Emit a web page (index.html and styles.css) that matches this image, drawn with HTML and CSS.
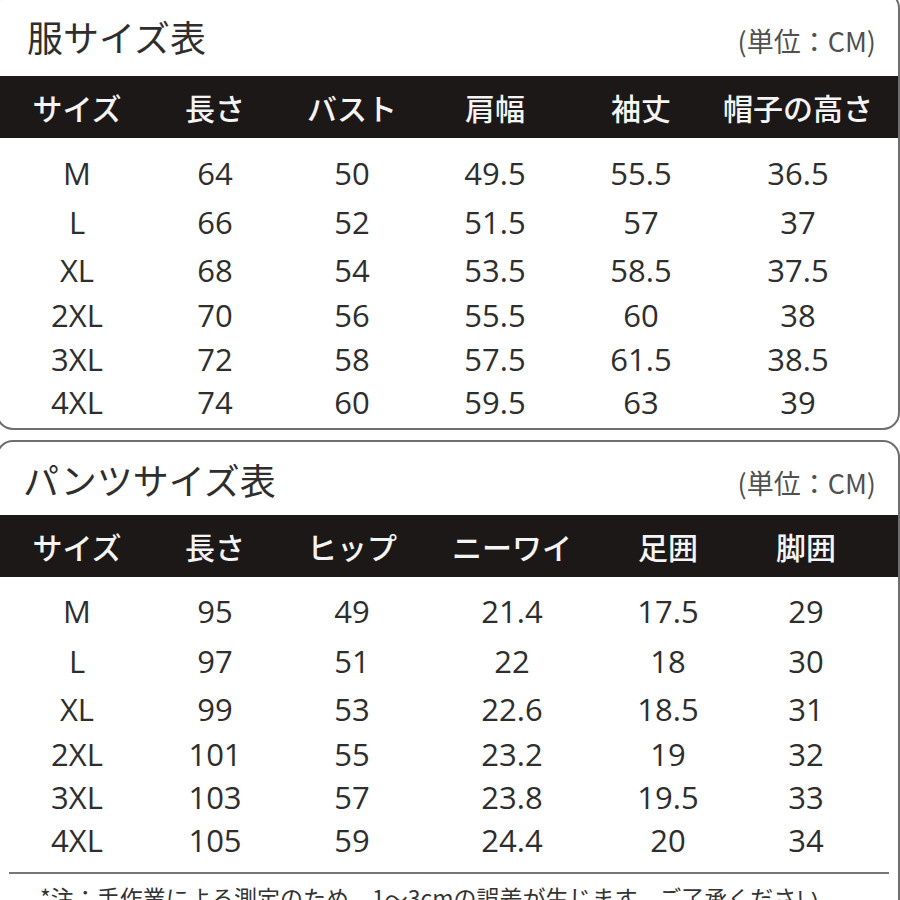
FILE: index.html
```html
<!DOCTYPE html>
<html lang="ja">
<head>
<meta charset="utf-8">
<title>サイズ表</title>
<link rel="stylesheet" href="styles.css">
</head>
<body>
<section class="card card-tops">
  <div class="card-head">
    <h2 class="title">服サイズ表</h2>
    <span class="unit">(単位：CM)</span>
  </div>
  <div class="table tops">
    <div class="row head"><span>サイズ</span><span>長さ</span><span>バスト</span><span>肩幅</span><span>袖丈</span><span>帽子の高さ</span></div>
    <div class="body">
      <div class="row"><span>M</span><span>64</span><span>50</span><span>49.5</span><span>55.5</span><span>36.5</span></div>
      <div class="row"><span>L</span><span>66</span><span>52</span><span>51.5</span><span>57</span><span>37</span></div>
      <div class="row"><span>XL</span><span>68</span><span>54</span><span>53.5</span><span>58.5</span><span>37.5</span></div>
      <div class="row"><span>2XL</span><span>70</span><span>56</span><span>55.5</span><span>60</span><span>38</span></div>
      <div class="row"><span>3XL</span><span>72</span><span>58</span><span>57.5</span><span>61.5</span><span>38.5</span></div>
      <div class="row"><span>4XL</span><span>74</span><span>60</span><span>59.5</span><span>63</span><span>39</span></div>
    </div>
  </div>
</section>
<section class="card card-pants">
  <div class="card-head">
    <h2 class="title">パンツサイズ表</h2>
    <span class="unit">(単位：CM)</span>
  </div>
  <div class="table pants">
    <div class="row head"><span>サイズ</span><span>長さ</span><span>ヒップ</span><span>ニーワイ</span><span>足囲</span><span>脚囲</span></div>
    <div class="body">
      <div class="row"><span>M</span><span>95</span><span>49</span><span>21.4</span><span>17.5</span><span>29</span></div>
      <div class="row"><span>L</span><span>97</span><span>51</span><span>22</span><span>18</span><span>30</span></div>
      <div class="row"><span>XL</span><span>99</span><span>53</span><span>22.6</span><span>18.5</span><span>31</span></div>
      <div class="row"><span>2XL</span><span>101</span><span>55</span><span>23.2</span><span>19</span><span>32</span></div>
      <div class="row"><span>3XL</span><span>103</span><span>57</span><span>23.8</span><span>19.5</span><span>33</span></div>
      <div class="row"><span>4XL</span><span>105</span><span>59</span><span>24.4</span><span>20</span><span>34</span></div>
    </div>
  </div>
  <hr class="rule">
  <p class="note">*注：手作業による測定のため、1〜3cmの誤差が生じます。ご了承ください。</p>
</section>
</body>
</html>
```

FILE: styles.css
```css
html, body {
  margin: 0;
  padding: 0;
  background: #ffffff;
}
body {
  width: 900px;
  height: 900px;
  overflow: hidden;
  font-family: "Noto Sans CJK JP", "Noto Sans", sans-serif;
  color: #2f2f2f;
}

.card {
  margin-left: -4px;
  margin-right: 0;
  border: 2px solid #6e6e6e;
  border-radius: 17px;
  background: #fff;
}
.card-tops {
  margin-top: -9px;
}
.card-pants {
  margin-top: 10px;
  padding-bottom: 30px;
}

.card-head {
  display: flex;
  justify-content: space-between;
  align-items: center;
  padding: 0 22px 0 29px;
}
.card-tops .card-head {
  height: 83px;
  padding-top: 3px;
  box-sizing: border-box;
}
.card-pants .card-head {
  height: 73px;
  padding-left: 25px;
}

.title {
  margin: 0;
  font-family: "Noto Sans CJK JP", sans-serif;
  font-weight: 400;
  font-size: 36px;
  line-height: 1;
  color: #2e2e2e;
}
.unit {
  margin-top: 8px;
  font-family: "Noto Sans CJK JP", sans-serif;
  font-size: 27px;
  line-height: 1;
  color: #505050;
}

.row {
  display: grid;
  align-items: center;
  justify-items: center;
  padding-left: 10px;
}
.tops .row {
  grid-template-columns: 138px 138px 136px 150px 142px 172px;
}
.pants .row {
  grid-template-columns: 138px 138px 136px 184px 128px 148px;
}

.row.head {
  height: 62px;
  background: #1c1818;
  color: #f4f4f4;
  font-family: "Noto Sans CJK JP", sans-serif;
  font-weight: 500;
  font-size: 30px;
  line-height: 1;
}

.body .row {
  font-family: "Open Sans", "Noto Sans", sans-serif;
  font-size: 31px;
  line-height: 1;
  color: #2e2e2e;
}

.tops .body {
  padding: 10px 0 4px;
}
.tops .body .row:nth-child(1) { height: 50px; }
.tops .body .row:nth-child(2) { height: 49px; }
.tops .body .row:nth-child(3) { height: 46px; }
.tops .body .row:nth-child(4) { height: 45px; }
.tops .body .row:nth-child(5) { height: 43px; }
.tops .body .row:nth-child(6) { height: 43px; }

.pants .body {
  padding-top: 9px;
}
.pants .body .row:nth-child(1) { height: 50px; }
.pants .body .row:nth-child(2) { height: 50px; }
.pants .body .row:nth-child(3) { height: 46px; }
.pants .body .row:nth-child(4) { height: 44px; }
.pants .body .row:nth-child(5) { height: 43px; }
.pants .body .row:nth-child(6) { height: 42px; }

.rule {
  margin: 11px 9px 0 11px;
  height: 2px;
  border: 0;
  background: #777777;
}

.note {
  margin: 7px 0 0;
  padding-left: 42px;
  font-family: "Noto Sans CJK JP", sans-serif;
  font-size: 23px;
  line-height: 32px;
  color: #333;
  white-space: nowrap;
}
```
